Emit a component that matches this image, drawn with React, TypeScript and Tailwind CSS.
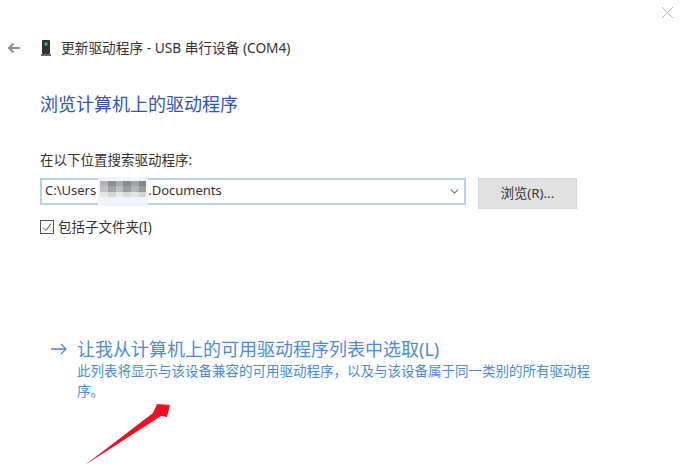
import { ChevronDown } from 'lucide-react';

const mosaic = [
  'bg-[#b4b4b6]', 'bg-[#8d8d8f]', 'bg-[#aaaaac]', 'bg-[#8a8a8c]', 'bg-[#a5a5a7]', 'bg-[#858587]',
  'bg-[#c2c2c4]', 'bg-[#a3a3a5]', 'bg-[#bcbcbe]', 'bg-[#9c9c9e]', 'bg-[#b3b3b5]', 'bg-[#9a9a9c]',
  'bg-[#e4e4e7]', 'bg-[#d6d6d9]', 'bg-[#e6e6e9]', 'bg-[#dadadd]', 'bg-[#e2e2e5]', 'bg-[#d4d4d7]',
];

export default function App() {
  return (
    <div className="relative w-[682px] h-[476px] bg-white overflow-hidden font-['Noto_Sans','Noto_Sans_CJK_SC',sans-serif] text-[13.5px] text-[#333]">
      <div className="flex justify-end pt-[7px] pr-[9px] h-[36px]">
        <svg width="11" height="11" viewBox="0 0 11 11" stroke="#b5b5b5" strokeWidth="1">
          <path d="M0 0L11 11M11 0L0 11" />
        </svg>
      </div>

      <div className="flex items-center h-[24px] pl-[7px]">
        <svg width="14" height="12" viewBox="0 0 14 12" fill="none" stroke="#8e8e8e" strokeWidth="2">
          <path d="M13 6H2M6.5 1.5L2 6L6.5 10.5" />
        </svg>
        <svg className="ml-[20px]" width="10" height="16" viewBox="0 0 10 16">
          <rect x="1" y="0" width="8" height="14" rx="1" fill="#333" />
          <rect x="3.5" y="2.5" width="3" height="3" fill="#36c05a" />
          <rect x="0" y="14" width="10" height="2" fill="#666" />
        </svg>
        <span className="ml-[10px] text-[13.7px]">更新驱动程序 - USB 串行设备 (COM4)</span>
      </div>

      <h1 className="ml-[40px] mt-[31px] text-[18px] leading-[26px] font-normal text-[#2f55b3]">浏览计算机上的驱动程序</h1>

      <div className="ml-[40px] mt-[33px] leading-[20px]">在以下位置搜索驱动程序:</div>

      <div className="flex items-start ml-[40px] mt-[8px]">
        <div className="flex items-center justify-between w-[426px] h-[27px] border-2 border-[#b4cff0] pl-[3px] pr-[3px]">
          <div className="flex items-center text-[13px] pb-[2px]">
            <span>C:\Users</span>
            <span className="relative w-[52px] h-[20px]">
              {/* blurred user name */}
              <span className="absolute left-[2px] top-[-4px] w-[50px] h-[29px] bg-[#f1f5fb] px-[2px] pt-[4px]">
                <span className="grid grid-cols-6 grid-rows-3 h-[17px]">
                  {mosaic.map((c, i) => (
                    <span key={i} className={c} />
                  ))}
                </span>
              </span>
            </span>
            <span>.Documents</span>
          </div>
          <ChevronDown size={13} color="#777" />
        </div>
        <button className="ml-[12px] w-[99px] h-[31px] bg-[#e1e1e1] border border-[#d6d6d6] text-[13.3px]">浏览(R)...</button>
      </div>

      <div className="flex items-center ml-[40px] mt-[8px] h-[20px]">
        <span className="flex items-center justify-center w-[14px] h-[14px] border border-[#555]">
          <svg width="10" height="10" viewBox="0 0 10 10" fill="none" stroke="#555" strokeWidth="1">
            <path d="M1 5.5L4 8.5L9 1.5" />
          </svg>
        </span>
        <span className="ml-[4px]">包括子文件夹(I)</span>
      </div>

      <div className="flex ml-[51px] mt-[100px]">
        <svg className="mt-[6px]" width="16" height="12" viewBox="0 0 16 12" fill="none" stroke="#4a86d8" strokeWidth="1.3">
          <path d="M0 6H15M10 1L15 6L10 11" />
        </svg>
        <div className="ml-[10px] w-[518px] text-[#4a8bdc]">
          <div className="text-[18px] leading-[24px]">让我从计算机上的可用驱动程序列表中选取(L)</div>
          <p className="text-[13.5px] leading-[20px]">此列表将显示与该设备兼容的可用驱动程序，以及与该设备属于同一类别的所有驱动程序。</p>
        </div>
      </div>

      {/* red annotation arrow */}
      <svg className="absolute left-[80px] top-[400px]" width="95" height="70" viewBox="80 400 95 70">
        <path d="M85 465L153 413L157 404L170 405L167 417L161 416Z" fill="#ee0f23" />
      </svg>
    </div>
  );
}
